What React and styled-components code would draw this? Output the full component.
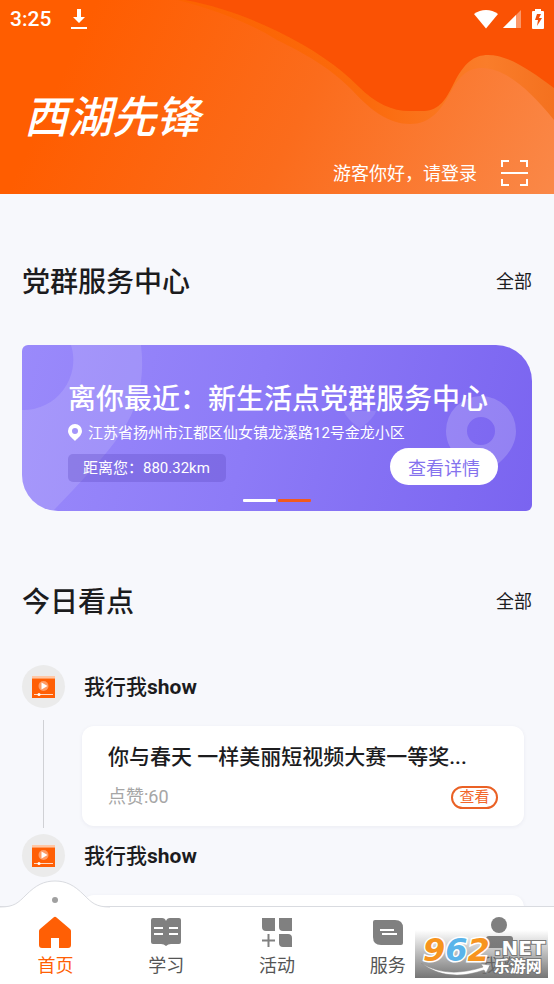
import React from 'react'
import styled, { createGlobalStyle } from "styled-components";

const GlobalStyle = createGlobalStyle`
  * {
    box-sizing: border-box;
  }

  body {
    margin: 0;
    background-color: #f7f8fc;
    color: #1c1c1e;
    font-family: Roboto, "Noto Sans CJK SC", sans-serif;
  }

  h1, h2, h3, p, ul {
    margin: 0;
    padding: 0;
  }

  button {
    font-family: inherit;
    cursor: pointer;
  }

  a {
    color: inherit;
    text-decoration: none;
  }

  svg {
    display: block;
    flex: none;
  }
`;

const Container = styled.div`
  display: flex;
  flex-direction: column;
  height: 100vh;
  position: relative;
`;

const Content = styled.div`
  flex: 1;
  min-height: 0;
  overflow-y: auto;
  scrollbar-width: none;
`;

const Header = styled.header`
  position: relative;
  color: white;
  padding-bottom: 8px;
  background: linear-gradient(115deg, #ff5d00 15%, #fb6c1c 55%, #fa8848 100%);
`;

const HeaderWaves = styled.svg`
  position: absolute;
  top: 0;
  left: 0;
  width: 100%;
  height: 100%;
`;

const HeaderRow = styled.div`
  position: relative;
  display: flex;
  align-items: center;
`;

const StatusBar = styled(HeaderRow)`
  height: 38px;
  padding: 0 10px;
  gap: 20px;
  font-size: 21px;
  font-weight: 500;
`;

const StatusIcons = styled.div`
  display: flex;
  align-items: center;
  gap: 5px;
  margin-left: auto;

  svg:last-child {
    margin-left: 6px;
  }
`;

const Logo = styled.h1`
  position: relative;
  margin: 50px 24px 10px;
  font-size: 44px;
  line-height: 60px;
  font-weight: 500;
  font-style: italic;
`;

const UserRow = styled(HeaderRow)`
  justify-content: flex-end;
  gap: 24px;
  height: 28px;
  padding: 0 26px;
`;

const LoginLink = styled.a`
  font-size: 18px;
`;

const IconButton = styled.button`
  padding: 0;
  border: none;
  background: none;
  color: inherit;
`;

const Main = styled.main`
  display: flex;
  flex-direction: column;
  gap: 69px;
  padding: 66px 22px 0;
`;

const SectionHeader = styled.div`
  display: flex;
  justify-content: space-between;
  align-items: center;
  height: 40px;
  margin-bottom: 45px;
`;

const SectionTitle = styled.h2`
  font-size: 28px;
  font-weight: 500;
`;

const MoreLink = styled.a`
  font-size: 18px;
`;

const CenterCard = styled.div`
  position: relative;
  overflow: hidden;
  padding: 37px 34px 9px 46px;
  border-radius: 6px 36px 6px 36px;
  background: linear-gradient(105deg, #9a8afb 0%, #8d7bf7 45%, #7a64f0 100%);
  color: white;
`;

const CardDecor = styled.svg`
  position: absolute;
  top: 0;
  ${(props) => props.$side}: 0;
`;

const CenterName = styled.h3`
  position: relative;
  font-size: 28px;
  line-height: 36px;
  font-weight: 500;
  white-space: nowrap;
`;

const Address = styled.p`
  position: relative;
  display: flex;
  align-items: center;
  gap: 6px;
  margin: 3px 0;
  font-size: 15px;
  line-height: 24px;
`;

const CenterFooter = styled.div`
  position: relative;
  display: flex;
  align-items: center;
  justify-content: space-between;
`;

const Distance = styled.span`
  margin-top: 2px;
  padding: 0 16px 0 15px;
  border-radius: 5px;
  background-color: rgba(90, 70, 190, 0.3);
  font-size: 15px;
  line-height: 28px;
`;

const DetailButton = styled.button`
  width: 108px;
  height: 37px;
  padding: 0;
  border: none;
  border-radius: 19px;
  background-color: white;
  color: #8572ee;
  font-size: 18px;
`;

const Pager = styled.div`
  position: relative;
  display: flex;
  justify-content: center;
  gap: 2px;
  margin: 14px 12px 0 0;
`;

const PagerBar = styled.span`
  width: 33px;
  height: 3px;
  border-radius: 1px;
  background-color: ${(props) => (props.$active ? "#f25a1e" : "white")};
`;

const Feed = styled.ul`
  list-style: none;
`;

const FeedItem = styled.li`
  display: grid;
  grid-template-columns: 43px 1fr;
  column-gap: 17px;
`;

const Avatar = styled.div`
  display: flex;
  align-items: center;
  justify-content: center;
  height: 43px;
  border-radius: 50%;
  background-color: #ebebeb;
`;

const FeedName = styled.h3`
  padding: 2px 0 0 2px;
  font-size: 21px;
  line-height: 41px;
  font-weight: 500;
`;

const Timeline = styled.div`
  justify-self: center;
  width: 1px;
  margin: 12px 0 6px;
  background-color: #d0d1d5;
`;

const PostCard = styled.article`
  height: 100px;
  margin: 18px 8px 8px 0;
  padding: 15px 26px;
  border-radius: 12px;
  background-color: white;
  box-shadow: 0 1px 4px rgba(30, 40, 80, 0.06);
`;

const PostTitle = styled.h3`
  font-size: 21px;
  line-height: 32px;
  font-weight: 500;
  white-space: nowrap;
`;

const PostFooter = styled.div`
  display: flex;
  align-items: center;
  justify-content: space-between;
  margin-top: 10px;
`;

const Likes = styled.span`
  color: #a6a6a6;
  font-size: 18px;
  line-height: 28px;
`;

const ViewButton = styled.button`
  width: 47px;
  height: 23px;
  padding: 0;
  border: 2px solid #ea6125;
  border-radius: 12px;
  background-color: white;
  color: #f2662a;
  font-size: 15px;
  line-height: 19px;
`;

const TabBar = styled.nav`
  position: relative;
  display: flex;
  height: 78px;
  border-top: 1px solid #d9dbe0;
  background-color: white;
`;

const Tab = styled.a`
  position: relative;
  flex: 1;
  display: flex;
  flex-direction: column;
  align-items: center;
  padding-top: 9px;
  color: ${(props) => (props.$active ? "#ff5f05" : "#555")};
  font-size: 18px;
  line-height: 28px;

  svg {
    margin-bottom: 4px;
  }
`;

const TabBump = styled.div`
  position: absolute;
  top: -27px;
  left: 0;
  right: 0;
  display: flex;
  justify-content: center;
`;

const Watermark = styled.div`
  position: absolute;
  right: 6px;
  bottom: 6px;
  display: flex;
  gap: 4px;
  width: 133px;
  height: 48px;
  padding-left: 8px;
  background: linear-gradient(rgba(120, 120, 120, 0), rgba(110, 110, 110, 0.95));
  font-family: "DejaVu Sans", "Noto Sans CJK SC", sans-serif;
  font-weight: 700;
  pointer-events: none;
`;

const Swoosh = styled.svg`
  position: absolute;
  left: 6px;
  bottom: 1px;
`;

const WatermarkDigits = styled.div`
  position: relative;
  font-size: 32px;
  line-height: 40px;
  font-style: italic;
  -webkit-text-stroke: 3px white;
  paint-order: stroke fill;
`;

const Digit = styled.span`
  color: ${(props) => props.$color};
`;

const WatermarkSide = styled.div`
  position: relative;
  display: flex;
  flex-direction: column;
  padding-top: 8px;
  color: white;
  -webkit-text-stroke: 2px #777;
  paint-order: stroke fill;
`;

const WatermarkNet = styled.span`
  font-size: 20px;
  line-height: 20px;
`;

const WatermarkName = styled.span`
  font-size: 16px;
  line-height: 18px;
`;

const Waves = () => (
  <HeaderWaves viewBox="0 0 554 194" preserveAspectRatio="none" aria-hidden="true">
    <defs>
      <linearGradient id="wave" x1="0" y1="0" x2="1" y2="0">
        <stop offset="0" stopColor="#fc6200" />
        <stop offset="0.5" stopColor="#fb6a0c" />
        <stop offset="0.82" stopColor="#fa7d2a" />
        <stop offset="1" stopColor="#f4711f" />
      </linearGradient>
    </defs>
    <path
      fill="url(#wave)"
      d="M178 0C215 10 248 22 277 40C310 56 332 70 352 90C372 112 390 124 410 124C430 124 440 111 449 95C458 78 466 68 482 68C505 68 530 90 554 120V0Z"
    />
    <path
      fill="#fa5204"
      d="M185 0C218 6 248 17 277 31C312 48 338 66 358 86C376 104 392 111 410 111H424C440 110 446 99 454 83C464 63 474 55 488 55C508 55 530 70 554 88V0Z"
    />
  </HeaderWaves>
);

const DownloadIcon = () => (
  <svg width="16" height="22" viewBox="0 0 16 22" fill="white" aria-hidden="true">
    <path d="M6 1h4v8h4l-6 6-6-6h4z" />
    <rect x="0" y="19" width="16" height="2" />
  </svg>
);

const WifiIcon = () => (
  <svg width="24" height="20" viewBox="0 0 24 20" fill="white" aria-hidden="true">
    <path d="M12 19.500L0 5C7-.5 17-.5 24 5z" />
  </svg>
);

const SignalIcon = () => (
  <svg width="18" height="18" viewBox="0 0 18 18" fill="white" aria-hidden="true">
    <path d="M0 18L18 0V18z" opacity="0.4" />
    <path d="M0 18L13 5V18z" />
  </svg>
);

const BatteryIcon = () => (
  <svg width="12" height="20" viewBox="0 0 12 20" aria-hidden="true">
    <path fill="white" d="M3 0h6v2h2a1 1 0 0 1 1 1v16a1 1 0 0 1-1 1H1a1 1 0 0 1-1-1V3a1 1 0 0 1 1-1h2z" />
    <path fill="#f2500a" d="M5 5h4L7 9h3l-5 8 1-6H3z" />
  </svg>
);

const ScanIcon = () => (
  <svg width="27" height="27" viewBox="0 0 27 27" fill="none" stroke="white" strokeWidth="2" aria-hidden="true">
    <path d="M1 8V2h7M19 2h7v6M26 20v6h-7M8 26H1v-6M0 14h27" />
  </svg>
);

const PinIcon = () => (
  <svg width="14" height="18" viewBox="0 0 14 18" fill="white" aria-hidden="true">
    <path
      fillRule="evenodd"
      d="M7 0a7 7 0 0 1 7 7c0 4-4 7-7 10C4 14 0 11 0 7a7 7 0 0 1 7-7zm0 4a3 3 0 1 0 0 6 3 3 0 0 0 0-6z"
    />
  </svg>
);

const VideoIcon = () => (
  <svg width="23" height="22" viewBox="0 0 23 22" aria-hidden="true">
    <rect width="23" height="3" fill="#ffc7a5" />
    <rect y="2" width="23" height="2" fill="#ff9a5e" />
    <rect y="3" width="23" height="19" fill="#ff5f05" />
    <circle cx="11.500" cy="10" r="5" fill="#ff9c66" />
    <path d="M9.500 6.500v7l6-3.500z" fill="white" />
    <path d="M2 18.500h19" stroke="#ffd9c4" strokeWidth="1" />
    <circle cx="7" cy="18.500" r="1.500" fill="white" />
  </svg>
);

const HomeIcon = () => (
  <svg width="32" height="32" viewBox="0 0 32 32" fill="#ff5f05" aria-hidden="true">
    <path d="M14.500 1.500q1.500-1.500 3 0L31 13q1 1 1 2v14q0 3-3 3h-9V22h-8v10H3q-3 0-3-3V15q0-1 1-2z" />
  </svg>
);

const BookIcon = () => (
  <svg width="32" height="32" viewBox="0 0 32 32" aria-hidden="true">
    <path
      fill="#808080"
      d="M1 4q0-2 2-2h9q3 0 4 3 1-3 4-3h9q2 0 2 2v22q0 2-2 2h-8q-3 0-5 2-2-2-5-2H3q-2 0-2-2z"
    />
    <path d="M4 12h9M19 12h9M4 18h9M19 18h9" stroke="white" strokeWidth="2" />
  </svg>
);

const ActivityIcon = () => (
  <svg width="32" height="32" viewBox="0 0 32 32" fill="#808080" aria-hidden="true">
    <path d="M1 2h13v13H5q-4 0-4-4zM18 2h13v13H22q-4 0-4-4zM18 18h9q4 0 4 4v9H22q-4 0-4-4z" />
    <path d="M7.500 18v13M1 24.500h13" stroke="#808080" strokeWidth="2" />
  </svg>
);

const ServiceIcon = () => (
  <svg width="32" height="32" viewBox="0 0 32 32" aria-hidden="true">
    <path fill="#808080" d="M1 6q0-2 2-2h20q8 0 8 8v15q0 2-2 2H9q-8 0-8-8z" />
    <path d="M8 14h14M10 18h15" stroke="white" strokeWidth="2" />
  </svg>
);

const ProfileIcon = () => (
  <svg width="32" height="32" viewBox="0 0 32 32" fill="#808080" aria-hidden="true">
    <circle cx="16" cy="9" r="8" />
    <path d="M3 23q0-3 3-3h21q3 0 3 3v9H3z" />
  </svg>
);

const tabs = [
  { label: "首页", Icon: HomeIcon, active: true },
  { label: "学习", Icon: BookIcon },
  { label: "活动", Icon: ActivityIcon },
  { label: "服务", Icon: ServiceIcon },
  { label: "我的", Icon: ProfileIcon },
];

const posts = [
  { id: 1, title: "你与春天 一样美丽短视频大赛一等奖...", likes: 60 },
  { id: 2 },
];

const App = () => {
  return (
    <>
      <GlobalStyle />
      <Container>
        <Content>
          <Header>
            <Waves />
            <StatusBar>
              <span>3:25</span>
              <DownloadIcon />
              <StatusIcons>
                <WifiIcon />
                <SignalIcon />
                <BatteryIcon />
              </StatusIcons>
            </StatusBar>
            <Logo>西湖先锋</Logo>
            <UserRow>
              <LoginLink href="#login">游客你好，请登录</LoginLink>
              <IconButton type="button" aria-label="扫一扫">
                <ScanIcon />
              </IconButton>
            </UserRow>
          </Header>

          <Main>
            <section>
              <SectionHeader>
                <SectionTitle>党群服务中心</SectionTitle>
                <MoreLink href="#centers">全部</MoreLink>
              </SectionHeader>
              <CenterCard>
                <CardDecor $side="left" width="130" height="166" viewBox="0 0 130 166" aria-hidden="true">
                  <path
                    fill="white"
                    fillOpacity="0.13"
                    fillRule="evenodd"
                    d="M0 0H119Q125 50 100 86Q90 105 31 166H0zM0 0V65A50 50 0 0 0 49 0z"
                  />
                </CardDecor>
                <CardDecor $side="right" width="190" height="166" viewBox="0 0 190 166" fill="white" aria-hidden="true">
                  <path
                    fillOpacity="0.18"
                    fillRule="evenodd"
                    d="M139 51a35 35 0 0 1 35 35c0 22-20 34-35 47-15-13-35-25-35-47a35 35 0 0 1 35-35zm0 21a14 14 0 1 0 0 28 14 14 0 0 0 0-28z"
                  />
                  <path fillOpacity="0.1" d="M2 66H34Q33 72 18 84Q3 72 2 66z" />
                </CardDecor>
                <CenterName>离你最近：新生活点党群服务中心</CenterName>
                <Address>
                  <PinIcon />
                  江苏省扬州市江都区仙女镇龙溪路12号金龙小区
                </Address>
                <CenterFooter>
                  <Distance>距离您：880.32km</Distance>
                  <DetailButton type="button">查看详情</DetailButton>
                </CenterFooter>
                <Pager>
                  <PagerBar />
                  <PagerBar $active />
                </Pager>
              </CenterCard>
            </section>

            <section>
              <SectionHeader>
                <SectionTitle>今日看点</SectionTitle>
                <MoreLink href="#news">全部</MoreLink>
              </SectionHeader>
              <Feed>
                {posts.map((post) => (
                  <FeedItem key={post.id}>
                    <Avatar>
                      <VideoIcon />
                    </Avatar>
                    <FeedName>
                      我行我<b>show</b>
                    </FeedName>
                    <Timeline />
                    <PostCard>
                      {post.title && (
                        <>
                          <PostTitle>{post.title}</PostTitle>
                          <PostFooter>
                            <Likes>点赞:{post.likes}</Likes>
                            <ViewButton type="button">查看</ViewButton>
                          </PostFooter>
                        </>
                      )}
                    </PostCard>
                  </FeedItem>
                ))}
              </Feed>
            </section>
          </Main>
        </Content>

        <TabBar>
          {tabs.map(({ label, Icon, active }) => (
            <Tab key={label} href="#" $active={active}>
              {active && (
                <TabBump>
                  <svg width="110" height="28" viewBox="0 0 110 28" aria-hidden="true">
                    <path
                      d="M0 27C14 27 18 23 26 15C36 5 44 1 55 1C66 1 74 5 84 15C92 23 96 27 110 27"
                      fill="white"
                      stroke="#d9dbe0"
                    />
                    <circle cx="55" cy="20" r="3" fill="#a0a0a0" />
                  </svg>
                </TabBump>
              )}
              <Icon />
              {label}
            </Tab>
          ))}
        </TabBar>

        <Watermark>
          <Swoosh width="70" height="14" viewBox="0 0 70 14" aria-hidden="true">
            <path d="M0 0Q26 16 62 4L60 1L69 2L65 10L63 7Q26 20 0 0z" fill="white" stroke="#888" strokeWidth="0.500" />
          </Swoosh>
          <WatermarkDigits>
            <Digit $color="#f7941d">9</Digit>
            <Digit $color="#5ab4ea">6</Digit>
            <Digit $color="#f7941d">2</Digit>
          </WatermarkDigits>
          <WatermarkSide>
            <WatermarkNet>.NET</WatermarkNet>
            <WatermarkName>乐游网</WatermarkName>
          </WatermarkSide>
        </Watermark>
      </Container>
    </>
  )
}

export default App;
